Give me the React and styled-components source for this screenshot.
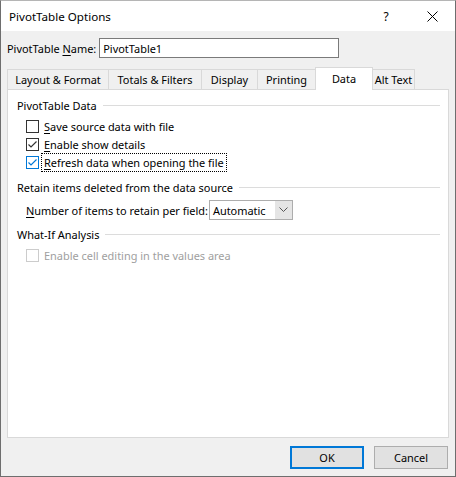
import React from "react";
import styled, { createGlobalStyle, css } from "styled-components";

const Global = createGlobalStyle`
  html, body { margin: 0; padding: 0; background: #f0f0f0; }
  * { box-sizing: border-box; }
`;

const FONT = `"Noto Sans", "Segoe UI", "Liberation Sans", sans-serif`;

const Window = styled.div`
  width: 456px;
  height: 477px;
  border: 1px solid #6e6e6e;
  border-top-color: #b5b5b5;
  background: #f0f0f0;
  display: flex;
  flex-direction: column;
  font-family: ${FONT};
  font-size: 10.95px;
  color: #000;
  white-space: nowrap;
`;

const TitleBar = styled.div`
  height: 30px;
  background: #fff;
  display: flex;
  align-items: center;
  padding-left: 8px;
  flex-shrink: 0;
`;

const Title = styled.div`
  flex: 1;
  font-size: 11.6px;
`;

const TitleBtn = styled.div`
  width: 46px;
  height: 30px;
  display: flex;
  align-items: center;
  justify-content: center;
  font-size: 12px;
`;

const Body = styled.div`
  flex: 1;
  display: flex;
  flex-direction: column;
  padding: 7px 6px 0 6px;
`;

const NameRow = styled.div`
  display: flex;
  align-items: center;
  gap: 3px;
  height: 20px;
`;

const Input = styled.div`
  width: 240px;
  height: 20px;
  border: 1px solid #7a7a7a;
  background: #fff;
  display: flex;
  align-items: center;
  padding-left: 3px;
`;

const U = styled.span`
  text-decoration: underline;
  text-underline-offset: 2px;
`;

const Tabs = styled.div`
  display: flex;
  align-items: flex-end;
  margin-top: 9px;
  height: 22px;
  position: relative;
  z-index: 1;
`;

const Tab = styled.div`
  height: ${(p) => (p.$active ? 23 : 20)}px;
  width: ${(p) => p.$w}px;
  border: 1px solid #d9d9d9;
  border-bottom: none;
  background: ${(p) => (p.$active ? "#fff" : "#f0f0f0")};
  display: flex;
  align-items: center;
  justify-content: center;
  margin-left: -1px;
  ${(p) =>
    p.$active &&
    css`
      margin-bottom: -1px;
      padding-bottom: 2px;
    `}
  &:first-child { margin-left: 0; }
`;

const Panel = styled.div`
  width: 442px;
  height: 349px;
  background: #fff;
  border: 1px solid #d9d9d9;
  padding: 7px 8px 0 9px;
  display: flex;
  flex-direction: column;
`;

const Section = styled.div`
  display: flex;
  align-items: center;
  gap: 6px;
  height: 16px;
  margin-top: ${(p) => p.$mt || 0}px;
`;

const Rule = styled.div`
  flex: 1;
  height: 1px;
  background: #dcdcdc;
`;

const Row = styled.div`
  display: flex;
  align-items: center;
  height: ${(p) => p.$h || 18}px;
  padding-left: 9px;
  margin-top: ${(p) => p.$mt || 0}px;
  color: ${(p) => (p.$disabled ? "#a0a0a0" : "#000")};
`;

const Box = styled.div`
  width: 13px;
  height: 13px;
  border: 1px solid ${(p) => (p.$disabled ? "#cccccc" : p.$focus ? "#0078d7" : "#333")};
  background: #fff;
  margin-right: 4px;
  display: flex;
  align-items: center;
  justify-content: center;
`;

const Label = styled.span`
  padding: 0 1px;
  outline: ${(p) => (p.$focus ? "1px dotted #000" : "none")};
  outline-offset: 1px;
  line-height: 15px;
`;

const Select = styled.div`
  margin-left: 1px;
  width: 84px;
  height: 20px;
  border: 1px solid #adadad;
  background: #fff;
  display: flex;
  align-items: center;
`;

const SelectText = styled.div`
  flex: 1;
  padding-left: 3px;
`;

const DropBtn = styled.div`
  width: 17px;
  height: 18px;
  background: #e5e5e5;
  display: flex;
  align-items: center;
  justify-content: center;
`;

const Footer = styled.div`
  display: flex;
  justify-content: flex-end;
  gap: 10px;
  padding: 8px 1px 0 0;
`;

const Button = styled.div`
  width: 74px;
  height: 23px;
  background: #e1e1e1;
  border: ${(p) => (p.$primary ? "2px solid #0078d7" : "1px solid #adadad")};
  display: flex;
  align-items: center;
  justify-content: center;
`;

const Check = ({ color }) => (
  <svg width="11" height="11" viewBox="0 0 11 11">
    <path d="M1.5 5.5 L4 8 L9.5 2.5" fill="none" stroke={color} strokeWidth="1.2" />
  </svg>
);

function CheckRow({ checked, focus, disabled, children, mt }) {
  return (
    <Row $mt={mt} $disabled={disabled}>
      <Box $focus={focus} $disabled={disabled}>
        {checked && <Check color={focus ? "#0078d7" : "#333"} />}
      </Box>
      <Label $focus={focus}>{children}</Label>
    </Row>
  );
}

export default function App() {
  return (
    <>
      <Global />
      <Window>
        <TitleBar>
          <Title>PivotTable Options</Title>
          <TitleBtn>?</TitleBtn>
          <TitleBtn>
            <svg width="11" height="11" viewBox="0 0 11 11">
              <path d="M0.5 0.5 L10.5 10.5 M10.5 0.5 L0.5 10.5" stroke="#000" strokeWidth="1" />
            </svg>
          </TitleBtn>
        </TitleBar>
        <Body>
          <NameRow>
            <span>
              PivotTable <U>N</U>ame:
            </span>
            <Input>PivotTable1</Input>
          </NameRow>
          <Tabs>
            <Tab $w={102}>Layout &amp; Format</Tab>
            <Tab $w={94}>Totals &amp; Filters</Tab>
            <Tab $w={57}>Display</Tab>
            <Tab $w={59}>Printing</Tab>
            <Tab $w={58} $active>Data</Tab>
            <Tab $w={43}>Alt Text</Tab>
          </Tabs>
          <Panel>
            <Section>
              <span>PivotTable Data</span>
              <Rule />
            </Section>
            <CheckRow mt={4}>
              <U>S</U>ave source data with file
            </CheckRow>
            <CheckRow checked>
              <U>E</U>nable show details
            </CheckRow>
            <CheckRow checked focus>
              <U>R</U>efresh data when opening the file
            </CheckRow>
            <Section $mt={8}>
              <span>Retain items deleted from the data source</span>
              <Rule />
            </Section>
            <Row $mt={5} $h={20}>
              <span>
                <U>N</U>umber of items to retain per field:
              </span>
              <Select>
                <SelectText>Automatic</SelectText>
                <DropBtn>
                  <svg width="9" height="6" viewBox="0 0 9 6">
                    <path d="M0.5 0.5 L4.5 4.5 L8.5 0.5" fill="none" stroke="#555" strokeWidth="1" />
                  </svg>
                </DropBtn>
              </Select>
            </Row>
            <Section $mt={6}>
              <span>What-If Analysis</span>
              <Rule />
            </Section>
            <CheckRow disabled mt={4}>
              Enable cell editing in the values area
            </CheckRow>
          </Panel>
          <Footer>
            <Button $primary>OK</Button>
            <Button>Cancel</Button>
          </Footer>
        </Body>
      </Window>
    </>
  );
}
